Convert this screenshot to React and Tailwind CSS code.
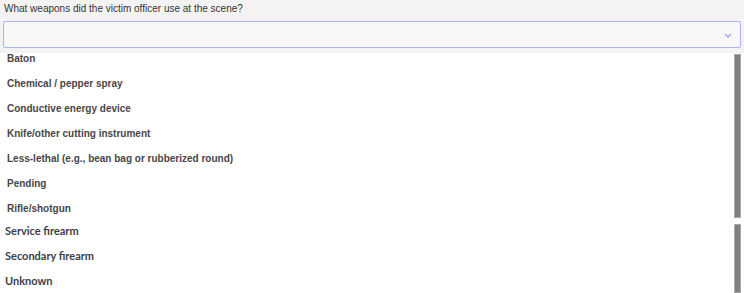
import React from "react";

const itemsA = [
  "Baton",
  "Chemical / pepper spray",
  "Conductive energy device",
  "Knife/other cutting instrument",
  "Less-lethal (e.g., bean bag or rubberized round)",
  "Pending",
  "Rifle/shotgun",
];
const itemsB = ["Service firearm", "Secondary firearm", "Unknown"];

export default function App() {
  return (
    <div className="w-[744px] h-[293px] overflow-hidden bg-white flex flex-col" style={{ fontFamily: '"Liberation Sans", Arial, sans-serif' }}>
      <div className="bg-[#f3f3f3] h-[53px] flex flex-col px-[3px] pt-[3px] shrink-0">
        <div className="text-[10px] leading-[12px] text-[#333] pl-[1px] h-[18px]">What weapons did the victim officer use at the scene?</div>
        <div className="h-[27px] w-[738px] border border-[#aab4f2] rounded-[2px] bg-[#f7f7f7] flex items-center justify-end pr-[8px]">
          <svg width="8" height="5" viewBox="0 0 8 5" className="mt-[1px]">
            <path d="M1 1 L4 4 L7 1" fill="none" stroke="#9aa6ee" strokeWidth="1.3" />
          </svg>
        </div>
      </div>
      <div className="flex flex-1 min-h-0">
        <div className="flex-1 flex flex-col">
          <div className="h-[166px] overflow-hidden shrink-0">
            <div className="flex flex-col -mt-[7px]">
              {itemsA.map((t) => (
                <div key={t} className="h-[25px] shrink-0 flex items-center pl-[7px] text-[10px] font-bold text-[#474747]">{t}</div>
              ))}
            </div>
          </div>
          <div className="flex flex-col">
            {itemsB.map((t) => (
              <div key={t} className="h-[25px] shrink-0 flex items-center pl-[5px] text-[11px] font-bold text-[#3d3d4a]" style={{ fontFamily: 'Lato, sans-serif' }}>{t}</div>
            ))}
          </div>
        </div>
        <div className="w-[10px] flex flex-col items-start pt-[1px]">
          <div className="w-[7px] h-[164px] bg-[#808080] border border-[#a8a8a8] shrink-0" />
          <div className="h-[6px] shrink-0" />
          <div className="w-[7px] flex-1 bg-[#808080] border border-[#a8a8a8]" />
        </div>
      </div>
    </div>
  );
}
